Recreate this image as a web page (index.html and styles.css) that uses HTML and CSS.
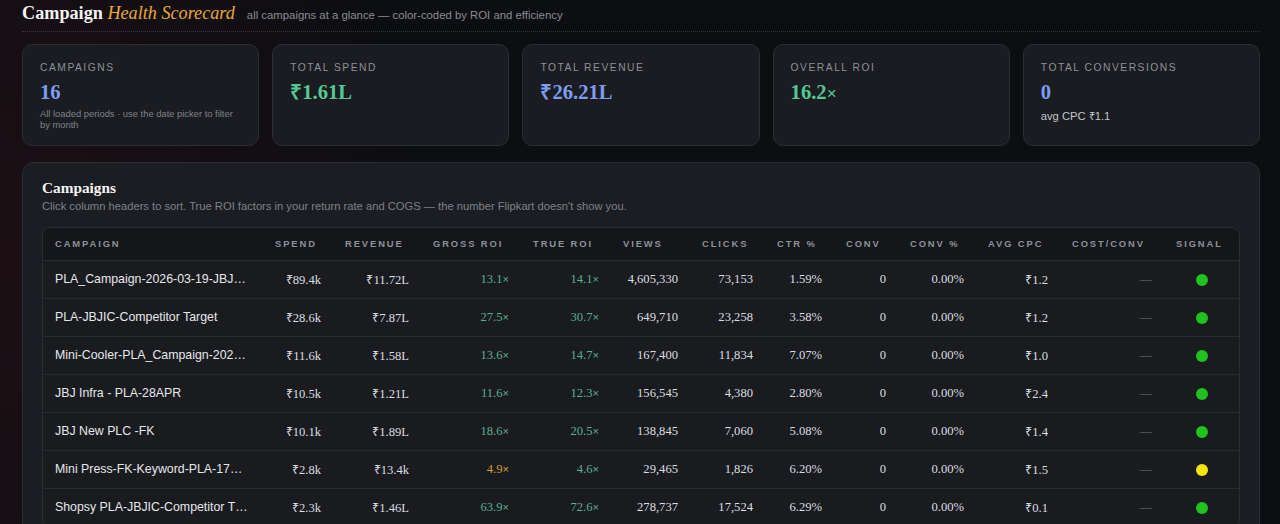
FILE: index.html
```html
<!DOCTYPE html>
<html lang="en">
<head>
<meta charset="utf-8">
<title>Campaign Health Scorecard</title>
<link rel="stylesheet" href="styles.css">
</head>
<body>
<div class="page">
  <header class="top">
    <h1 class="title">Campaign <em>Health Scorecard</em></h1>
    <span class="subtitle">all campaigns at a glance — color-coded by ROI and efficiency</span>
  </header>

  <section class="kpis">
    <div class="kpi">
      <div class="kpi-label">Campaigns</div>
      <div class="kpi-value blue">16</div>
      <div class="kpi-note">All loaded periods · use the date picker to filter by month</div>
    </div>
    <div class="kpi">
      <div class="kpi-label">Total Spend</div>
      <div class="kpi-value green">₹1.61L</div>
    </div>
    <div class="kpi">
      <div class="kpi-label">Total Revenue</div>
      <div class="kpi-value blue">₹26.21L</div>
    </div>
    <div class="kpi">
      <div class="kpi-label">Overall ROI</div>
      <div class="kpi-value green">16.2<span class="times">×</span></div>
    </div>
    <div class="kpi">
      <div class="kpi-label">Total Conversions</div>
      <div class="kpi-value blue">0</div>
      <div class="kpi-sub">avg CPC ₹1.1</div>
    </div>
  </section>

  <section class="panel">
    <h2 class="panel-title">Campaigns</h2>
    <p class="panel-desc">Click column headers to sort. True ROI factors in your return rate and COGS — the number Flipkart doesn't show you.</p>
    <div class="table-wrap">
      <table class="grid">
        <colgroup>
          <col class="w-name"><col class="w-spend"><col class="w-rev"><col class="w-groi"><col class="w-troi"><col class="w-views"><col class="w-clicks"><col class="w-ctr"><col class="w-conv"><col class="w-convp"><col class="w-cpc"><col class="w-cost"><col class="w-sig">
        </colgroup>
        <thead>
          <tr>
            <th>Campaign</th><th>Spend</th><th>Revenue</th><th>Gross ROI</th><th>True ROI</th><th>Views</th><th>Clicks</th><th>CTR %</th><th>Conv</th><th>Conv %</th><th>Avg CPC</th><th>Cost/Conv</th><th>Signal</th>
          </tr>
        </thead>
        <tbody>
          <tr>
            <td class="name">PLA_Campaign-2026-03-19-JBJ…</td><td>₹89.4k</td><td>₹11.72L</td><td class="good">13.1<span class="x">×</span></td><td class="good">14.1<span class="x">×</span></td><td>4,605,330</td><td>73,153</td><td>1.59%</td><td>0</td><td>0.00%</td><td>₹1.2</td><td class="dash">—</td><td class="sig"><span class="dot g"></span></td>
          </tr>
          <tr>
            <td class="name">PLA-JBJIC-Competitor Target</td><td>₹28.6k</td><td>₹7.87L</td><td class="good">27.5<span class="x">×</span></td><td class="good">30.7<span class="x">×</span></td><td>649,710</td><td>23,258</td><td>3.58%</td><td>0</td><td>0.00%</td><td>₹1.2</td><td class="dash">—</td><td class="sig"><span class="dot g"></span></td>
          </tr>
          <tr>
            <td class="name">Mini-Cooler-PLA_Campaign-202…</td><td>₹11.6k</td><td>₹1.58L</td><td class="good">13.6<span class="x">×</span></td><td class="good">14.7<span class="x">×</span></td><td>167,400</td><td>11,834</td><td>7.07%</td><td>0</td><td>0.00%</td><td>₹1.0</td><td class="dash">—</td><td class="sig"><span class="dot g"></span></td>
          </tr>
          <tr>
            <td class="name">JBJ Infra - PLA-28APR</td><td>₹10.5k</td><td>₹1.21L</td><td class="good">11.6<span class="x">×</span></td><td class="good">12.3<span class="x">×</span></td><td>156,545</td><td>4,380</td><td>2.80%</td><td>0</td><td>0.00%</td><td>₹2.4</td><td class="dash">—</td><td class="sig"><span class="dot g"></span></td>
          </tr>
          <tr>
            <td class="name">JBJ New PLC -FK</td><td>₹10.1k</td><td>₹1.89L</td><td class="good">18.6<span class="x">×</span></td><td class="good">20.5<span class="x">×</span></td><td>138,845</td><td>7,060</td><td>5.08%</td><td>0</td><td>0.00%</td><td>₹1.4</td><td class="dash">—</td><td class="sig"><span class="dot g"></span></td>
          </tr>
          <tr>
            <td class="name">Mini Press-FK-Keyword-PLA-17…</td><td>₹2.8k</td><td>₹13.4k</td><td class="warn">4.9<span class="x">×</span></td><td class="good">4.6<span class="x">×</span></td><td>29,465</td><td>1,826</td><td>6.20%</td><td>0</td><td>0.00%</td><td>₹1.5</td><td class="dash">—</td><td class="sig"><span class="dot y"></span></td>
          </tr>
          <tr>
            <td class="name">Shopsy PLA-JBJIC-Competitor T…</td><td>₹2.3k</td><td>₹1.46L</td><td class="good">63.9<span class="x">×</span></td><td class="good">72.6<span class="x">×</span></td><td>278,737</td><td>17,524</td><td>6.29%</td><td>0</td><td>0.00%</td><td>₹0.1</td><td class="dash">—</td><td class="sig"><span class="dot g"></span></td>
          </tr>
        </tbody>
      </table>
    </div>
  </section>
</div>
</body>
</html>
```

FILE: styles.css
```css
* { box-sizing: border-box; }

html, body {
  margin: 0;
  padding: 0;
}

body {
  min-height: 524px;
  background:
    radial-gradient(ellipse 420px 520px at 0% 45%, rgba(70, 18, 26, 0.28), rgba(0, 0, 0, 0) 100%),
    #0d0e12;
  color: #d6d8dc;
  font-family: "Liberation Sans", Arial, sans-serif;
}

.page {
  padding: 0 20px 24px 22px;
}

/* header */
.top {
  display: flex;
  align-items: baseline;
  gap: 12px;
  padding: 1px 0 6px;
  border-bottom: 1px dotted #35373d;
}

.title {
  margin: 0;
  font-family: "Liberation Serif", "Times New Roman", serif;
  font-size: 18.2px;
  line-height: 24px;
  font-weight: 700;
  color: #f3f3f3;
}

.title em {
  font-weight: 400;
  font-style: italic;
  color: #e8a83c;
}

.subtitle {
  font-size: 11.35px;
  color: #8a8c91;
}

/* KPI cards */
.kpis {
  display: grid;
  grid-template-columns: repeat(5, 1fr);
  gap: 13px;
  margin-top: 12px;
}

.kpi {
  min-height: 102px;
  padding: 16px 17px 14px;
  background: #1a1c21;
  border: 1px solid #2a2d34;
  border-radius: 10px;
}

.kpi-label {
  font-size: 10.3px;
  line-height: 14px;
  letter-spacing: 1.5px;
  text-transform: uppercase;
  color: #8c9098;
}

.kpi-value {
  margin-top: 5px;
  font-family: "Liberation Serif", "Times New Roman", serif;
  font-size: 20.6px;
  line-height: 24px;
  font-weight: 700;
}

.kpi-value .times {
  font-family: "Liberation Sans", Arial, sans-serif;
  font-weight: 400;
  font-size: 17px;
}

.blue { color: #7d9df0; }
.green { color: #55c893; }

.kpi-note {
  margin-top: 4px;
  font-size: 9.4px;
  line-height: 11px;
  color: #7f838b;
}

.kpi-sub {
  margin-top: 5px;
  font-size: 11.2px;
  line-height: 14px;
  color: #c3c6cc;
}

/* campaigns panel */
.panel {
  margin-top: 16px;
  padding: 15px 19px 20px;
  background: #1b1d22;
  border: 1px solid #2a2d34;
  border-radius: 12px;
}

.panel-title {
  margin: 0;
  font-family: "Liberation Serif", "Times New Roman", serif;
  font-size: 15.3px;
  line-height: 20px;
  font-weight: 700;
  color: #f4f4f4;
}

.panel-desc {
  margin: 1px 0 0;
  font-size: 11.2px;
  line-height: 15px;
  color: #7d828a;
}

.table-wrap {
  margin-top: 13px;
  border: 1px solid #2a2d34;
  border-radius: 8px;
  overflow: hidden;
  background: #191b1f;
}

.grid {
  width: 100%;
  table-layout: fixed;
  border-collapse: collapse;
}

.w-name { width: 220px; }
.w-spend { width: 70px; }
.w-rev { width: 88px; }
.w-groi { width: 100px; }
.w-troi { width: 90px; }
.w-views { width: 79px; }
.w-clicks { width: 75px; }
.w-ctr { width: 69px; }
.w-conv { width: 64px; }
.w-convp { width: 78px; }
.w-cpc { width: 84px; }
.w-cost { width: 104px; }
.w-sig { width: 75px; }

.grid th {
  height: 32px;
  padding: 0 12px;
  text-align: left;
  font-size: 9.4px;
  font-weight: 700;
  letter-spacing: 1.9px;
  text-transform: uppercase;
  color: #8d9199;
  background: #141619;
  border-bottom: 1px solid #2a2d34;
  white-space: nowrap;
}

.grid td {
  height: 38px;
  padding: 0 12px;
  text-align: right;
  font-family: "Liberation Serif", "Times New Roman", serif;
  font-size: 12.6px;
  color: #dcdee2;
  border-bottom: 1px solid #272a31;
  white-space: nowrap;
}

.grid td.name {
  padding-right: 8px;
  text-align: left;
  font-family: "Liberation Sans", Arial, sans-serif;
  font-size: 12.35px;
  color: #e6e8eb;
  overflow: hidden;
  text-overflow: ellipsis;
}

.grid td.good { color: #5bb08f; }
.grid td.warn { color: #d89c36; }

.x {
  font-family: "Liberation Sans", Arial, sans-serif;
  font-size: 11px;
}

.grid td.dash { color: #6f737b; }

.grid td.sig { text-align: center; }

.dot {
  display: inline-block;
  width: 12px;
  height: 12px;
  border-radius: 50%;
  vertical-align: middle;
}

.dot.g { background: #1fc21f; }
.dot.y { background: #f6e50d; }
```
